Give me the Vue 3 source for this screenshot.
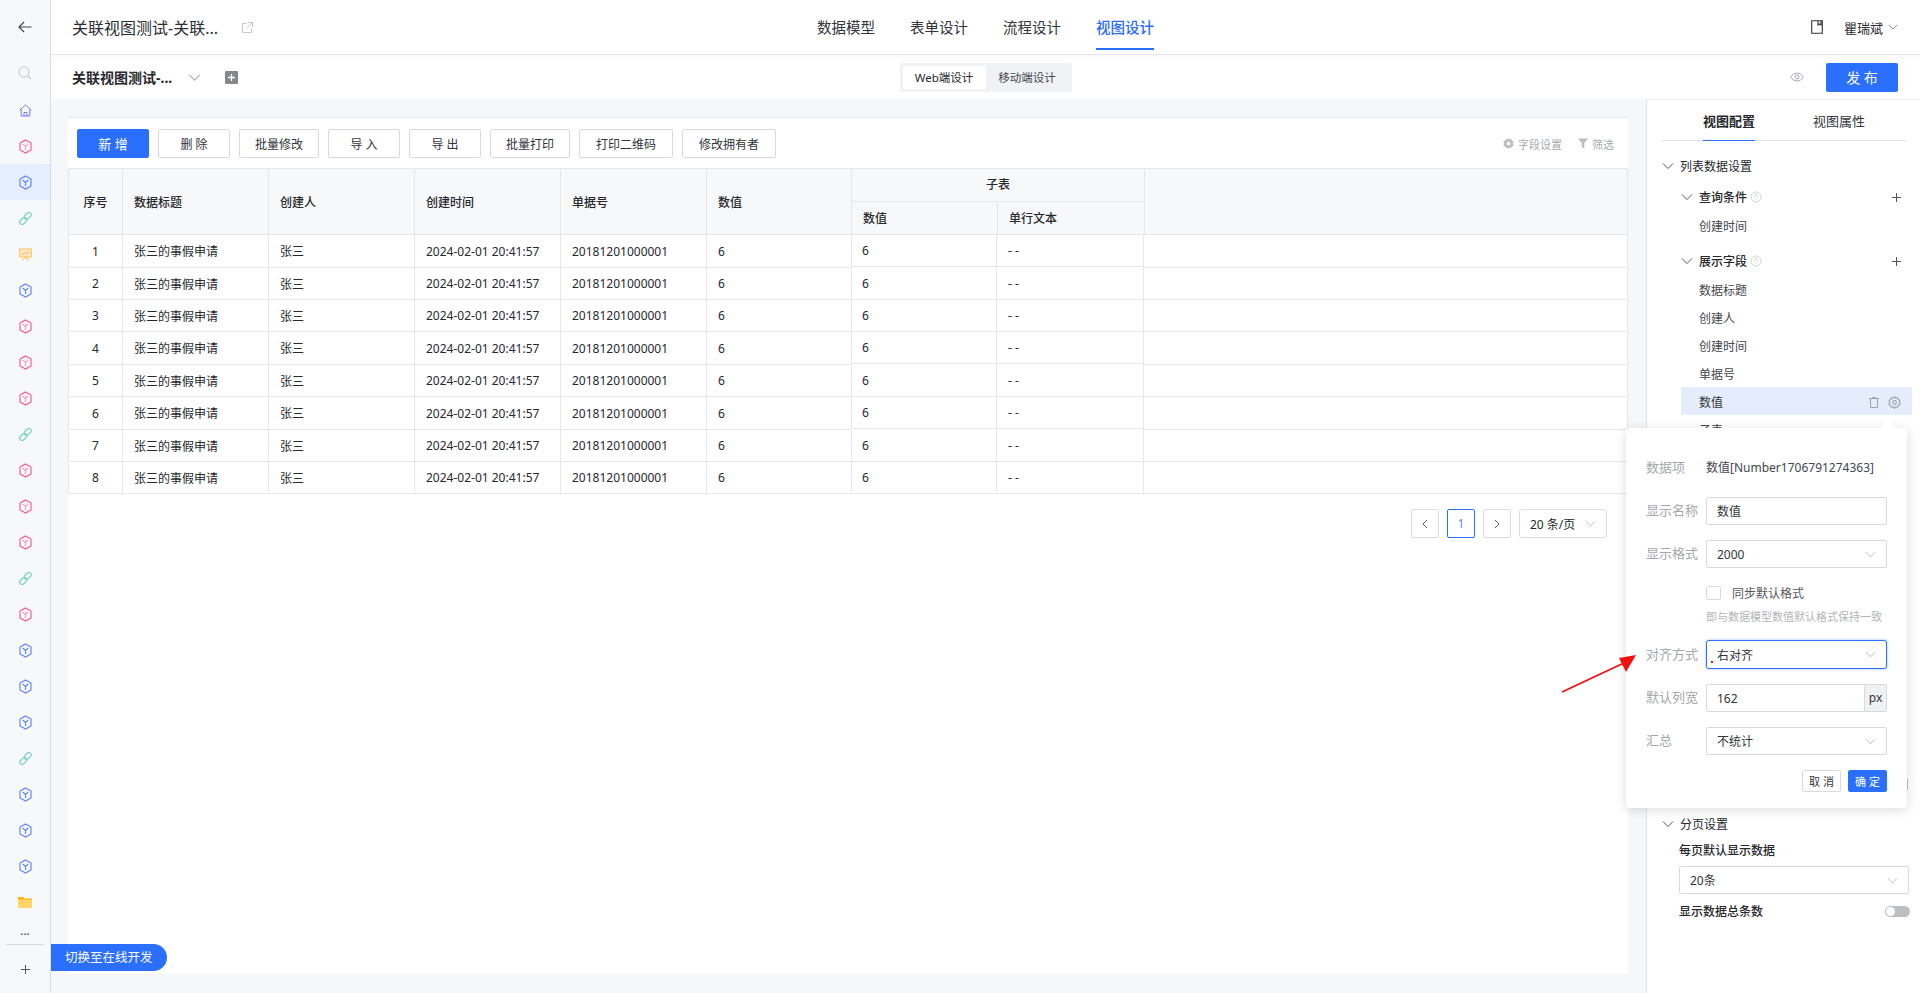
<script setup>
const navItems = ['cube-pink', 'cube-blue', 'link', 'monitor', 'cube-blue', 'cube-pink', 'cube-pink', 'cube-pink', 'link', 'cube-pink', 'cube-pink', 'cube-pink', 'link', 'cube-pink', 'cube-blue', 'cube-blue', 'cube-blue', 'link', 'cube-blue', 'cube-blue', 'cube-blue']
const actions = [
  { text: '删 除', size: 'w72' },
  { text: '批量修改', size: 'w80' },
  { text: '导 入', size: 'w72' },
  { text: '导 出', size: 'w72' },
  { text: '批量打印', size: 'w80' },
  { text: '打印二维码', size: 'w94' },
  { text: '修改拥有者', size: 'w94' },
]
const tabs = ['数据模型', '表单设计', '流程设计', '视图设计']
const mainHeights = [33, 32, 32, 33, 32, 33, 32, 32]
const subHeights = [32, 33, 32, 32, 33, 32, 33, 32]
const fields = ['数据标题', '创建人', '创建时间', '单据号']
</script>

<template>
  <div class="page">
    <svg class="defs" width="0" height="0">
      <symbol id="chev" viewBox="0 0 12 12"><path d="M1 3.5 6 8.5 11 3.5" fill="none" stroke="currentColor" stroke-width="1" /></symbol>
      <symbol id="plus" viewBox="0 0 12 12"><path d="M6 1V11M1 6H11" fill="none" stroke="currentColor" stroke-width="1.1" /></symbol>
      <symbol id="help" viewBox="0 0 12 12">
        <circle cx="6" cy="6" r="5" fill="none" stroke="currentColor" stroke-width=".8" />
        <path d="M4.6 4.7C4.7 3.1 7.5 3.1 7.5 4.7 7.5 5.8 6 5.8 6 7.2M6 8.2V9" fill="none" stroke="currentColor" stroke-width=".8" />
      </symbol>
    </svg>

    <aside class="sidebar">
      <div class="side-back">
        <svg width="14" height="12" viewBox="0 0 14 12"><path d="M6 1 1 6 6 11M1 6H13.5" fill="none" stroke="#444" stroke-width="1.1" /></svg>
      </div>
      <div class="side-search">
        <svg width="14" height="14" viewBox="0 0 14 14"><circle cx="6" cy="6" r="5" fill="none" stroke="#c9ccd2" stroke-width="1.1" /><path d="M10 10 13 13" stroke="#c9ccd2" stroke-width="1.1" /></svg>
      </div>
      <div class="side-item">
        <svg width="13" height="13" viewBox="0 0 13 13"><path d="M.7 6.3 6.5 1l5.8 5.3M2.2 5.4V12h8.6V5.4M5 12V8.5h3V12" fill="none" stroke="#6f7ff0" stroke-width="1" /></svg>
      </div>
      <div v-for="(item, i) in navItems" :key="i" class="side-item" :class="{ active: i === 1 }">
        <svg v-if="item.startsWith('cube')" width="13" height="15" viewBox="0 0 13 15" :class="item">
          <path class="shell" d="M6.5 1 12 4.1V10.9L6.5 14 1 10.9V4.1Z" />
          <path class="core" d="M3.8 5 6.5 7.4 9.2 5M6.5 7.4V11" />
        </svg>
        <svg v-else-if="item === 'link'" width="13" height="13" viewBox="0 0 13 13">
          <g fill="none" stroke="#7fd4cf" stroke-width="1.3">
            <rect x=".4" y="6.700" width="7.800" height="4.600" rx="2.300" transform="rotate(-45 4.300 9)" />
            <rect x="4.800" y="1.700" width="7.800" height="4.600" rx="2.300" transform="rotate(-45 8.700 4)" />
          </g>
        </svg>
        <svg v-else width="13" height="13" viewBox="0 0 13 13">
          <rect x=".7" y="1" width="11.6" height="8" fill="#ffe9c4" stroke="#ffbd5c" />
          <path d="M3 7 5.5 4.8 7 6 10 3.4M6.5 9 3.5 12.5M6.5 9 9.5 12.5" fill="none" stroke="#ffb03e" />
        </svg>
      </div>
      <div class="side-item">
        <svg width="14" height="11" viewBox="0 0 14 11"><path d="M0 1.2C0 .5.4 0 1 0h4l1.4 1.6H14V3H0Z" fill="#ffb000" /><rect y="2.6" width="14" height="8.4" rx=".8" fill="#ffd667" /></svg>
      </div>
      <div class="side-dots">...</div>
      <div class="side-plus">
        <svg width="11" height="11"><use href="#plus" /></svg>
      </div>
    </aside>

    <div class="main">
      <header class="topbar">
        <div class="top-left">
          <span class="title">关联视图测试-关联...</span>
          <svg class="ext" width="11" height="11" viewBox="0 0 11 11"><path d="M5 1.5H.5V10.500h9V6M6 .5h4.500V5M10.500.5 5 6" fill="none" stroke="#c6c9cf" /></svg>
        </div>
        <nav class="tabs">
          <a v-for="(tab, i) in tabs" :key="tab" class="tab" :class="{ on: i === 3 }">{{ tab }}</a>
        </nav>
        <div class="top-right">
          <svg width="12" height="14" viewBox="0 0 12 14"><path d="M.7.7H11.300V13.300H.7ZM7 .7V5L8.500 4 10 5V.7" fill="none" stroke="#333" stroke-width="1.1" /></svg>
          <span class="user">瞿瑞斌</span>
          <svg class="chev-top" width="10" height="10"><use href="#chev" /></svg>
        </div>
      </header>

      <div class="subbar">
        <div class="sub-left">
          <span class="view-name">关联视图测试-...</span>
          <svg class="sub-chev" width="13" height="13"><use href="#chev" /></svg>
          <svg width="13" height="13" viewBox="0 0 12 12"><rect width="12" height="12" rx="1" fill="#85878c" /><path d="M6 2.800V9.200M2.800 6H9.200" stroke="#fff" stroke-width="1.200" /></svg>
        </div>
        <div class="segment">
          <span class="seg on">Web端设计</span>
          <span class="seg">移动端设计</span>
        </div>
        <div class="sub-right">
          <svg width="14" height="10" viewBox="0 0 14 10"><path d="M.6 5C3.500-.2 10.500-.2 13.400 5 10.500 10.200 3.500 10.200.6 5Z" fill="none" stroke="#a6a9ae" /><circle cx="7" cy="5" r="2" fill="none" stroke="#a6a9ae" /></svg>
          <button class="publish">发 布</button>
        </div>
      </div>

      <div class="body">
        <section class="canvas">
          <div class="card">
            <div class="toolbar">
              <button class="btn primary w72">新 增</button>
              <button v-for="a in actions" :key="a.text" class="btn" :class="a.size">{{ a.text }}</button>
              <div class="tool-right">
                <span class="tool-link">
                  <svg width="11" height="11" viewBox="0 0 11 11"><path d="M5.500 0 6.600 1.500 8.500.9 8.800 2.700 10.700 3.200 9.800 5.500 10.700 7.800 8.800 8.300 8.500 10.100 6.600 9.500 5.500 11 4.400 9.500 2.500 10.100 2.200 8.300.3 7.800 1.200 5.500.3 3.200 2.200 2.700 2.500.9 4.400 1.500Z" fill="#b9bcc2" /><circle cx="5.500" cy="5.500" r="1.800" fill="#fff" /></svg>
                  字段设置
                </span>
                <span class="tool-link">
                  <svg width="10" height="11" viewBox="0 0 10 11"><path d="M0 .5H10L6.300 5V10.500L3.700 9V5Z" fill="#b9bcc2" /></svg>
                  筛选
                </span>
              </div>
            </div>

            <div class="table">
              <div class="thead">
                <div class="th c-no center">序号</div>
                <div class="th c-w">数据标题</div>
                <div class="th c-w">创建人</div>
                <div class="th c-w">创建时间</div>
                <div class="th c-w">单据号</div>
                <div class="th c-n">数值</div>
                <div class="th-group">
                  <div class="th-top">子表</div>
                  <div class="th-sub">
                    <div class="th c-s1">数值</div>
                    <div class="th c-s2">单行文本</div>
                  </div>
                </div>
                <div class="th-rest"></div>
              </div>
              <div class="tbody">
                <div class="tb-main">
                  <div v-for="(h, i) in mainHeights" :key="i" class="tr" :style="{ height: h + 'px' }">
                    <div class="td c-no center">{{ i + 1 }}</div>
                    <div class="td c-w">张三的事假申请</div>
                    <div class="td c-w">张三</div>
                    <div class="td c-w">2024-02-01 20:41:57</div>
                    <div class="td c-w">20181201000001</div>
                    <div class="td c-n">6</div>
                  </div>
                </div>
                <div class="tb-sub">
                  <div v-for="(h, i) in subHeights" :key="i" class="tr" :style="{ height: h + 'px' }">
                    <div class="td c-s1">6</div>
                    <div class="td c-s2">- -</div>
                  </div>
                </div>
                <div class="tb-rest">
                  <div v-for="(h, i) in mainHeights" :key="i" class="tr" :style="{ height: h + 'px' }"></div>
                </div>
              </div>
            </div>

            <div class="pager">
              <span class="pg"><svg width="8" height="10" viewBox="0 0 8 10"><path d="M6 1 2 5 6 9" fill="none" stroke="#555" /></svg></span>
              <span class="pg cur">1</span>
              <span class="pg"><svg width="8" height="10" viewBox="0 0 8 10"><path d="M2 1 6 5 2 9" fill="none" stroke="#555" /></svg></span>
              <span class="pg-size">20 条/页<svg width="11" height="11"><use href="#chev" /></svg></span>
            </div>
          </div>
        </section>

        <aside class="panel">
          <div class="panel-tabs">
            <span class="ptab on">视图配置</span>
            <span class="ptab">视图属性</span>
          </div>
          <div class="tree">
            <div class="group-title"><svg width="12" height="12"><use href="#chev" /></svg>列表数据设置</div>
            <div class="node-title first">
              <svg width="12" height="12"><use href="#chev" /></svg>查询条件
              <svg class="help" width="12" height="12"><use href="#help" /></svg>
              <svg class="add" width="11" height="11"><use href="#plus" /></svg>
            </div>
            <div class="leaf">创建时间</div>
            <div class="node-title second">
              <svg width="12" height="12"><use href="#chev" /></svg>展示字段
              <svg class="help" width="12" height="12"><use href="#help" /></svg>
              <svg class="add" width="11" height="11"><use href="#plus" /></svg>
            </div>
            <div v-for="f in fields" :key="f" class="leaf">{{ f }}</div>
            <div class="leaf selected">
              数值
              <span class="leaf-ops">
                <svg width="10" height="11" viewBox="0 0 10 11"><path d="M0 1.500H10M1.500 1.500V10.500H8.500V1.500M3.500 1.500V.5H6.500V1.500" fill="none" stroke="#9ea3ab" /></svg>
                <svg width="13" height="13" viewBox="0 0 12 12"><path d="M6 .6 7.100 2 8.900 1.600 9.400 3.300 11.100 3.900 10.500 6 11.100 8.100 9.400 8.700 8.900 10.400 7.100 10 6 11.400 4.900 10 3.100 10.400 2.600 8.700.9 8.100 1.500 6 .9 3.900 2.600 3.300 3.100 1.600 4.900 2Z" fill="none" stroke="#9ea3ab" /><circle cx="6" cy="6" r="1.700" fill="none" stroke="#9ea3ab" /></svg>
              </span>
            </div>
            <div class="leaf">子表</div>
            <div class="tree-gap"><span class="hidden-edge"></span></div>
            <div class="group-title"><svg width="12" height="12"><use href="#chev" /></svg>分页设置</div>
            <div class="page-label">每页默认显示数据</div>
            <div class="select page-select">20条<svg width="11" height="11"><use href="#chev" /></svg></div>
            <div class="page-total">显示数据总条数<span class="switch"></span></div>
          </div>
        </aside>
      </div>
    </div>

    <div class="dev-switch">切换至在线开发</div>

    <div class="popover">
      <span class="pop-notch"></span>
      <div class="pop-row data-row"><label>数据项</label><span class="pop-value">数值[Number1706791274363]</span></div>
      <div class="pop-row"><label>显示名称</label><div class="select">数值</div></div>
      <div class="pop-row"><label>显示格式</label><div class="select">2000<svg width="11" height="11"><use href="#chev" /></svg></div></div>
      <div class="pop-check">
        <div class="check-line"><span class="box"></span>同步默认格式</div>
        <div class="hint">即与数据模型数值默认格式保持一致</div>
      </div>
      <div class="pop-row"><label>对齐方式</label><div class="select focus"><i class="red-dot"></i>右对齐<svg width="11" height="11"><use href="#chev" /></svg></div></div>
      <div class="pop-row"><label>默认列宽</label><div class="select addon">162<span class="px">px</span></div></div>
      <div class="pop-row"><label>汇总</label><div class="select">不统计<svg width="11" height="11"><use href="#chev" /></svg></div></div>
      <div class="pop-foot">
        <button class="mini">取 消</button>
        <button class="mini ok">确 定</button>
      </div>
    </div>

    <svg class="red-arrow" width="80" height="44" viewBox="0 0 80 44">
      <path d="M2 42 66 12" stroke="#f40f0f" stroke-width="1.800" />
      <path d="M76 5 59 8 66 22Z" fill="#f40f0f" />
    </svg>
  </div>
</template>

<style>
html, body { margin: 0; background: #fff; }
</style>

<style scoped>
.page {
  position: relative;
  display: flex;
  width: 1920px;
  height: 993px;
  overflow: hidden;
  font-family: "Noto Sans", "Noto Sans CJK SC", sans-serif;
  font-size: 12px;
  color: #26282c;
}
.defs { position: absolute; }

.sidebar {
  box-sizing: border-box;
  width: 51px;
  flex: none;
  background: #f7f8fa;
  border-right: 1px solid #dcdde0;
  display: flex;
  flex-direction: column;
}
.side-back { height: 54px; display: flex; align-items: center; justify-content: center; }
.side-search { height: 38px; display: flex; align-items: center; justify-content: center; }
.side-item { height: 36px; flex: none; display: flex; align-items: center; justify-content: center; }
.side-item.active { background: #e5eeff; }
.shell, .core { fill: none; stroke-width: 1.1; }
.cube-pink .shell { stroke: #f2539b; }
.cube-pink .core { stroke: #f59ab9; }
.cube-blue .shell { stroke: #5d7ffa; }
.cube-blue .core { stroke: #5d7ffa; }
.side-dots {
  height: 24px;
  line-height: 22px;
  text-align: center;
  color: #444;
  border-bottom: 1px solid #d8d9dc;
  margin: 0 6px;
}
.side-plus { height: 48px; display: flex; align-items: center; justify-content: center; color: #555; }

.main { flex: 1; min-width: 0; display: flex; flex-direction: column; }

.topbar {
  box-sizing: border-box;
  height: 55px;
  flex: none;
  border-bottom: 1px solid #e6e7ea;
  display: grid;
  grid-template-columns: 1fr auto 1fr;
  align-items: start;
}
.top-left { display: flex; align-items: center; height: 54px; padding-left: 21px; }
.title { font-size: 16px; color: #2c2e33; }
.ext { margin-left: 24px; }
.tabs { display: flex; gap: 35px; }
.tab { height: 48px; line-height: 54px; font-size: 14.500px; color: #33353a; border-bottom: 2px solid transparent; }
.tab.on { color: #2d6cf6; font-weight: 500; border-bottom-color: #2b6fff; }
.top-right { display: flex; align-items: center; justify-content: flex-end; height: 54px; padding-right: 22px; }
.user { font-size: 13px; margin-left: 21px; color: #2c2e33; }
.chev-top { margin-left: 5px; color: #777; }

.subbar {
  box-sizing: border-box;
  height: 44px;
  flex: none;
  background: linear-gradient(#fafafa, #fff 6px);
  display: grid;
  grid-template-columns: 1fr auto 1fr;
  align-items: center;
}
.sub-left { display: flex; align-items: center; padding-left: 21px; }
.view-name { font-size: 14px; font-weight: 700; color: #26282c; }
.sub-chev { margin-left: 16px; margin-right: 24px; color: #a8abb0; }
.segment { display: flex; box-sizing: border-box; height: 29px; padding: 3px; background: #f1f2f5; border-radius: 2px; }
.seg { width: 83px; line-height: 23px; text-align: center; font-size: 11.500px; color: #44474c; }
.seg.on { background: #fff; color: #26282c; }
.sub-right { display: flex; align-items: center; justify-content: flex-end; gap: 22px; padding-right: 22px; }
.publish {
  width: 72px;
  height: 29px;
  border: 0;
  border-radius: 2px;
  background: #2b6fff;
  color: #fff;
  font: inherit;
  font-size: 14px;
}

.body { flex: 1; min-height: 0; display: flex; }
.canvas {
  flex: 1;
  min-width: 0;
  background: #f6f7f9;
  padding: 18px 18px 19px 17px;
  display: flex;
}
.card {
  flex: 1;
  min-width: 0;
  background: #fff;
  border-top: 1px solid #e6e7ea;
}
.toolbar { display: flex; align-items: center; gap: 9px; padding: 11px 0 10px 9px; height: 29px; }
.btn {
  box-sizing: border-box;
  height: 29px;
  padding: 0;
  background: #fff;
  border: 1px solid #d9dade;
  border-radius: 2px;
  font: inherit;
  color: #33353a;
}
.w72 { width: 72px; }
.w80 { width: 80px; }
.w94 { width: 94px; }
.btn.primary { background: #2b6fff; border-color: #2b6fff; color: #fff; font-size: 13px; }
.tool-right { margin-left: auto; display: flex; gap: 16px; padding-right: 14px; color: #a9acb2; font-size: 11px; }
.tool-link { display: flex; align-items: center; gap: 4px; }

.table { border-left: 1px solid #e6e7ea; border-right: 1px solid #e6e7ea; }
.thead { display: flex; height: 66px; background: #f7f8fa; border-top: 1px solid #e6e7ea; box-sizing: border-box; font-weight: 500; }
.th, .td {
  box-sizing: border-box;
  display: flex;
  align-items: center;
  flex: none;
  padding-left: 11px;
  border-right: 1px solid #e6e7ea;
}
.center { justify-content: center; padding-left: 0; }
.c-no { width: 54px; }
.c-w { width: 146px; }
.c-n { width: 145px; }
.c-s1 { width: 146px; }
.c-s2 { width: 147px; }
.th-group { width: 293px; flex: none; display: flex; flex-direction: column; }
.th-top {
  height: 32px;
  line-height: 32px;
  text-align: center;
  border-bottom: 1px solid #e6e7ea;
  border-right: 1px solid #e6e7ea;
  box-sizing: content-box;
  width: 292px;
}
.th-sub { display: flex; flex: 1; }
.th-rest { flex: 1; }
.tbody { display: flex; border-top: 1px solid #e6e7ea; margin-top: 0; }
.tb-main { width: 782px; flex: none; }
.tb-sub { width: 293px; flex: none; }
.tb-rest { flex: 1; }
.tr { box-sizing: border-box; display: flex; border-bottom: 1px solid #e6e7ea; }

.pager { display: flex; justify-content: flex-end; gap: 8px; padding: 15px 21px 0 0; }
.pg, .pg-size {
  box-sizing: border-box;
  height: 29px;
  display: flex;
  align-items: center;
  border: 1px solid #dcdde0;
  border-radius: 2px;
}
.pg { width: 28px; justify-content: center; }
.pg.cur { border-color: #2b6fff; color: #5c8dff; }
.pg-size { width: 88px; padding: 0 10px; justify-content: space-between; border-radius: 3px; color: #26282c; }
.pg-size svg { color: #b4b7bc; }

.panel {
  box-sizing: border-box;
  width: 274px;
  flex: none;
  background: #fff;
  border-left: 1px solid #e2e3e6;
  border-top: 1px solid #eceded;
}
.panel-tabs {
  box-sizing: border-box;
  height: 41px;
  margin: 0 14px 0 15px;
  padding-left: 41px;
  display: flex;
  gap: 58px;
  border-bottom: 1px solid #e2e3e6;
  font-size: 13px;
}
.ptab { height: 41px; line-height: 43px; box-sizing: border-box; color: #33353a; }
.ptab.on { font-weight: 700; border-bottom: 1px solid #2b6fff; color: #26282c; }
.tree { padding: 11px 8px 0 15px; }
.group-title { height: 28px; display: flex; align-items: center; gap: 6px; color: #26282c; }
.group-title svg, .node-title svg:first-child { color: #555; }
.node-title {
  height: 28px;
  margin-left: 19px;
  display: flex;
  align-items: center;
  gap: 6px;
  font-weight: 500;
  padding-right: 10px;
}
.node-title.first { margin-top: 3px; }
.node-title.second { margin-top: 8px; }
.help { color: #c4c6cb; margin-left: -3px; }
.add { margin-left: auto; color: #555; }
.leaf {
  box-sizing: border-box;
  height: 28px;
  margin-left: 19px;
  padding: 2px 0 0 18px;
  display: flex;
  align-items: center;
  color: #44474c;
}
.selected { background: #e5edfc; color: #33353a; }
.leaf-ops { margin-left: auto; display: flex; align-items: center; gap: 9px; padding-right: 11px; }
.tree-gap { position: relative; height: 367px; }
.hidden-edge { position: absolute; right: 4px; top: 336px; width: 1px; height: 11px; background: #a9c3ff; }
.page-label { margin: 1px 0 0 17px; height: 24px; line-height: 24px; font-weight: 500; }
.page-select { width: 230px; margin: 3px 0 0 17px; color: #44474c; }
.page-total { display: flex; align-items: center; justify-content: space-between; margin: 5px 0 0 17px; height: 24px; width: 231px; font-weight: 500; }
.switch {
  position: relative;
  width: 25px;
  height: 11px;
  border-radius: 6px;
  background: #bdbfc4;
}
.switch::after {
  content: "";
  position: absolute;
  left: 1px;
  top: 1px;
  width: 9px;
  height: 9px;
  border-radius: 50%;
  background: #fff;
}

.select {
  box-sizing: border-box;
  position: relative;
  height: 28px;
  display: flex;
  align-items: center;
  justify-content: space-between;
  padding: 0 10px;
  background: #fff;
  border: 1px solid #d9dade;
  border-radius: 2px;
  color: #33353a;
}
.select svg { color: #b4b7bc; flex: none; }
.select.focus { border-color: #2b6fff; box-shadow: 0 0 2px 1px #cfe0ff; height: 29px; border-radius: 3px; }
.select.addon { padding-right: 0; }
.px {
  align-self: stretch;
  width: 21px;
  line-height: 26px;
  text-align: center;
  background: #f0f1f3;
  border-left: 1px solid #d9dade;
}
.red-dot {
  position: absolute;
  left: 4px;
  top: 20px;
  width: 2px;
  height: 2px;
  background: #f40f0f;
}

.dev-switch {
  position: absolute;
  left: 51px;
  top: 944px;
  box-sizing: border-box;
  width: 116px;
  height: 27px;
  padding-left: 14px;
  line-height: 27px;
  font-size: 12.500px;
  color: #fff;
  background: #2b6fff;
  border-radius: 0 14px 14px 0;
}

.popover {
  position: absolute;
  left: 1626px;
  top: 428px;
  box-sizing: border-box;
  width: 281px;
  height: 380px;
  padding: 28px 20px 0;
  background: #fff;
  border-radius: 4px;
  box-shadow: 0 2px 12px rgba(0, 0, 0, .14);
  display: flex;
  flex-direction: column;
  gap: 15px;
}
.pop-notch {
  position: absolute;
  right: 14px;
  top: -5px;
  width: 10px;
  height: 10px;
  background: #fff;
  transform: rotate(45deg);
}
.pop-row { display: grid; grid-template-columns: 60px 181px; align-items: center; }
.pop-row label { font-size: 13px; line-height: 18px; margin-top: -2px; color: #a5a7ac; white-space: nowrap; }
.data-row { height: 24px; margin-bottom: 2px; }
.pop-value { color: #44474c; white-space: nowrap; margin-top: -2px; }
.pop-check { margin-left: 60px; height: 42px; }
.check-line { display: flex; align-items: center; height: 20px; color: #55585d; }
.box { box-sizing: border-box; width: 15px; height: 14px; margin-right: 11px; border: 1px solid #d9dade; border-radius: 2px; }
.hint { margin-top: 6px; line-height: 16px; font-size: 11px; color: #b3b5ba; white-space: nowrap; }
.pop-foot { display: flex; justify-content: flex-end; gap: 7px; }
.mini {
  box-sizing: border-box;
  width: 39px;
  height: 22px;
  padding: 0;
  background: #fff;
  border: 1px solid #d9dade;
  border-radius: 2px;
  font: inherit;
  font-size: 11px;
  color: #33353a;
}
.mini.ok { background: #2b6fff; border-color: #2b6fff; color: #fff; }

.red-arrow { position: absolute; left: 1560px; top: 650px; }
</style>
